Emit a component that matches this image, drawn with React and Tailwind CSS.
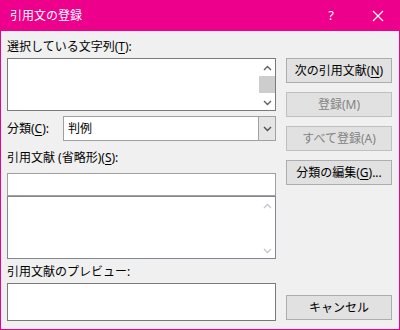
import React from 'react';

const font = { fontFamily: '"Segoe UI", "Noto Sans", "Noto Sans CJK JP", sans-serif' };

const Up = ({ c = '#606060' }) => (
  <svg width="9" height="6" viewBox="0 0 9 6">
    <path d="M1 5 L4.5 1.5 L8 5" fill="none" stroke={c} strokeWidth="1.4" />
  </svg>
);

const Down = ({ c = '#606060' }) => (
  <svg width="9" height="6" viewBox="0 0 9 6">
    <path d="M1 1 L4.5 4.5 L8 1" fill="none" stroke={c} strokeWidth="1.4" />
  </svg>
);

const Btn = ({ children, disabled, className = '' }) => (
  <div
    className={`h-[25px] flex items-center justify-center bg-[#e1e1e1] border text-[12px] ${
      disabled ? 'border-[#bfbfbf] text-[#838383]' : 'border-[#adadad] text-black'
    } ${className}`}
  >
    {children}
  </div>
);

const U = ({ children }) => <span className="underline underline-offset-2">{children}</span>;

export default function App() {
  return (
    <div className="w-[400px] h-[330px] bg-[#ec008c] flex flex-col" style={font}>
      {/* タイトルバー */}
      <div className="h-[31px] flex items-center text-white text-[12px]">
        <span className="ml-[10px]">引用文の登録</span>
        <span className="ml-auto mr-[38px] text-[13px]">?</span>
        <svg width="12" height="12" viewBox="0 0 12 12" className="mr-[16px]">
          <path d="M1 1 L11 11 M11 1 L1 11" stroke="#fff" strokeWidth="1.2" />
        </svg>
      </div>

      {/* 本体 */}
      <div className="flex-1 mx-[1px] mb-[1px] bg-[#f0f0f0] flex text-[12px] text-black">
        {/* 左列 */}
        <div className="w-[269px] ml-[6px] flex flex-col">
          <div className="pt-[6px] pb-[1px] leading-[20px]">
            選択している文字列(<U>T</U>):
          </div>
          <div className="h-[53px] bg-white border border-[#7a7a7a] flex justify-end">
            <div className="w-[16px] flex flex-col items-center">
              <div className="h-[17px] flex items-center justify-center"><Up /></div>
              <div className="h-[17px] w-[16px] bg-[#cdcdcd]"></div>
              <div className="flex-1"></div>
              <div className="h-[15px] flex items-center justify-center"><Down /></div>
            </div>
          </div>

          <div className="mt-[5px] flex items-center h-[25px]">
            <span className="w-[56px]">分類(<U>C</U>):</span>
            <div className="flex-1 h-[25px] bg-white border border-[#a0a0a0] flex items-center">
              <span className="ml-[4px]">判例</span>
              <div className="ml-auto w-[17px] h-full bg-[#e5e5e5] border-l border-[#a0a0a0] flex items-center justify-center">
                <Down c="#505050" />
              </div>
            </div>
          </div>

          <div className="h-[32px] flex items-center pt-[1px]">
            引用文献 (省略形)(<U>S</U>):
          </div>
          <div className="h-[23px] bg-white border border-[#a0a0a0]"></div>
          <div className="h-[63px] bg-white border border-[#828790] flex justify-end">
            <div className="w-[16px] flex flex-col items-center">
              <div className="h-[17px] flex items-center justify-center"><Up c="#c8c8c8" /></div>
              <div className="flex-1"></div>
              <div className="h-[15px] flex items-center justify-center"><Down c="#c8c8c8" /></div>
            </div>
          </div>

          <div className="h-[24px] flex items-center pt-[2px]">引用文献のプレビュー:</div>
          <div className="h-[38px] bg-white border border-[#7a7a7a]"></div>
        </div>

        {/* 右列 */}
        <div className="w-[106px] ml-[10px] flex flex-col">
          <Btn className="mt-[27px]">次の引用文献(<U>N</U>)</Btn>
          <Btn disabled className="mt-[9px]">登録(M)</Btn>
          <Btn disabled className="mt-[9px]">すべて登録(A)</Btn>
          <Btn className="mt-[9px]">分類の編集(<U>G</U>)...</Btn>
          <Btn className="mt-[110px]">キャンセル</Btn>
        </div>
      </div>
    </div>
  );
}
